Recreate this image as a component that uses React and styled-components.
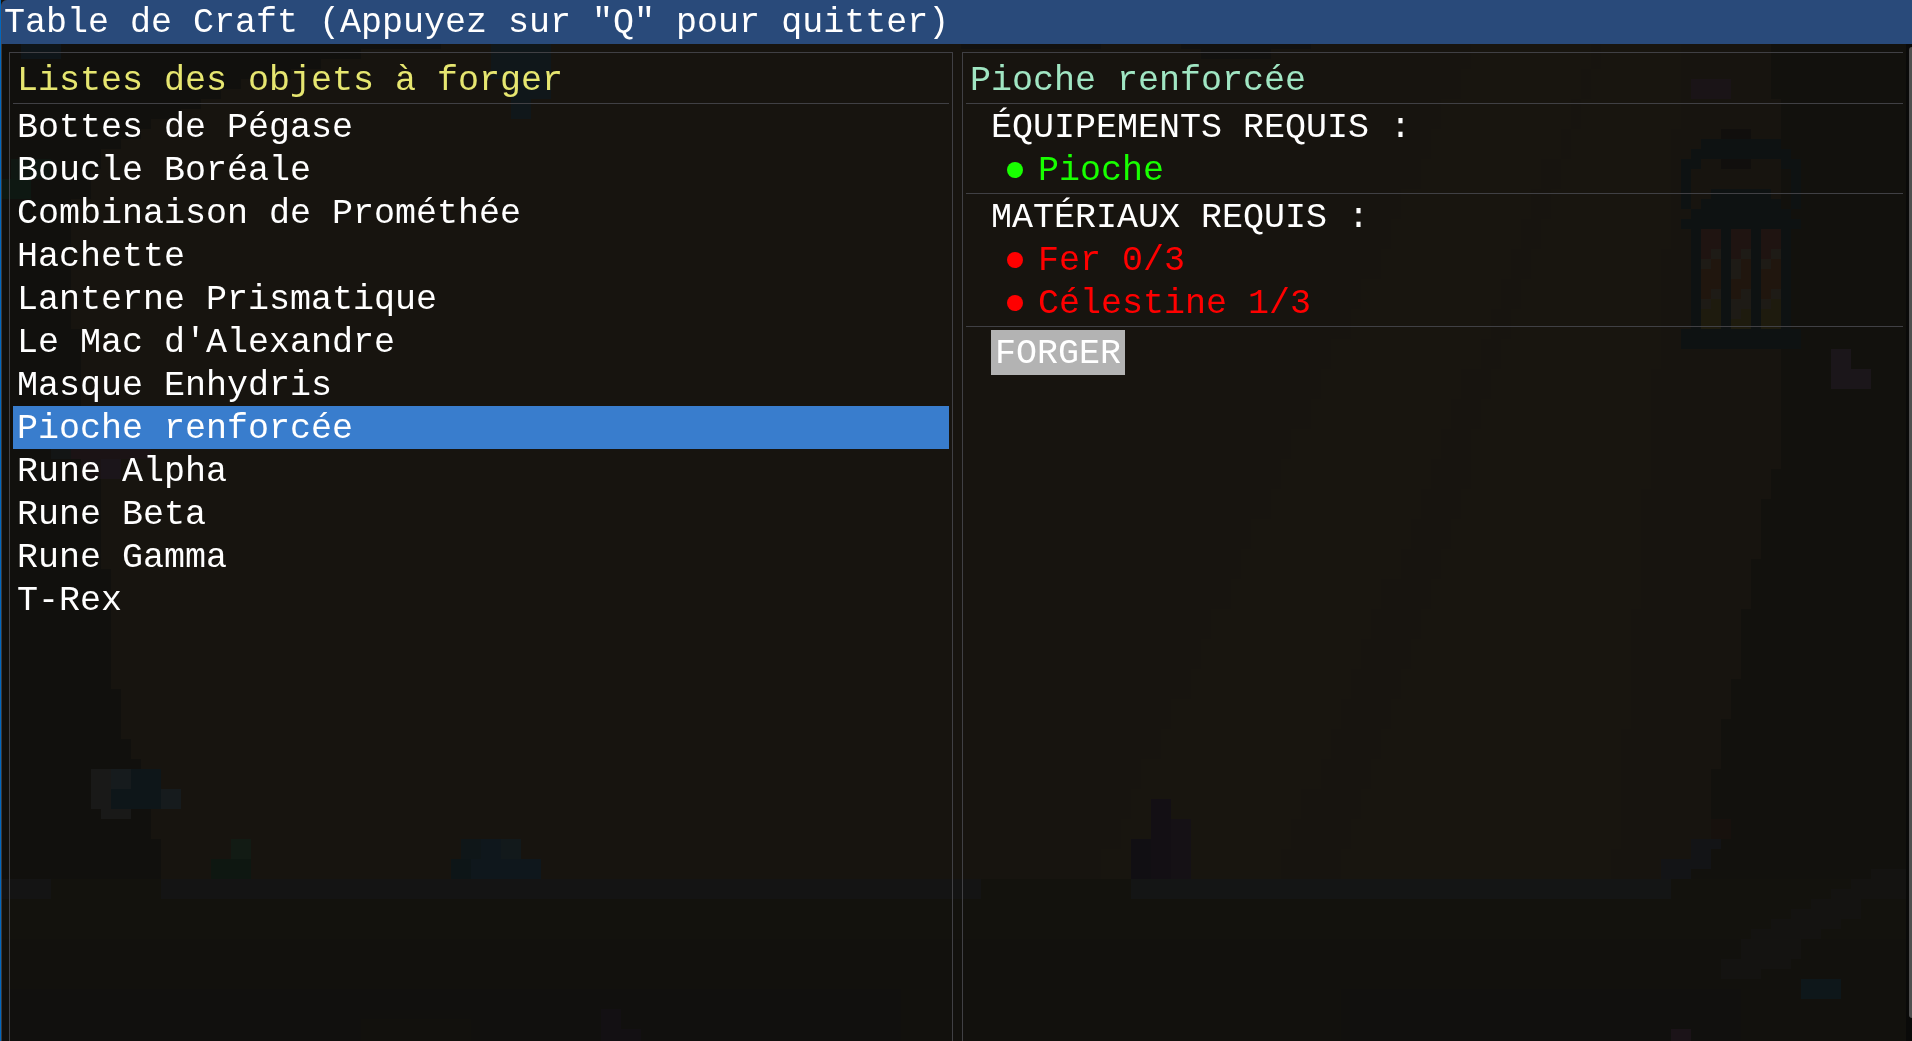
import React, { useState } from "react";
import styled, { createGlobalStyle } from "styled-components";

const GlobalStyle = createGlobalStyle`
  * { box-sizing: border-box; }
  body { margin: 0; background: #100f0d; }
  ul { list-style: none; margin: 0; padding: 0; }
  h1, h2, h3 { margin: 0; font: inherit; }
  button { font: inherit; color: inherit; border: 0; cursor: pointer; }
`;

const line = "#404044";

const Backdrop = styled.svg`
  position: fixed;
  inset: 0;
  width: 100%;
  height: 100%;
  z-index: -1;
`;

const Window = styled.main`
  min-height: 100vh;
  display: flex;
  flex-direction: column;
  border-left: 1px solid #0067c0;
  color: #ffffff;
  font-family: "Liberation Mono", "DejaVu Sans Mono", monospace;
  font-size: 35px;
  line-height: 39px;
`;

const TitleBar = styled.h1`
  height: 44px;
  padding: 4px 2px 0;
  background: #294a7a;
  border-left: 1px solid #3f4a63;
  border-top-left-radius: 6px;
  white-space: nowrap;
`;

const Body = styled.div`
  flex: 1;
  display: flex;
  border-left: 1px solid #3a3a3d;
`;

const Columns = styled.div`
  flex: 1;
  display: grid;
  grid-template-columns: 1fr 1fr;
  gap: 9px;
  padding: 8px 0 0 7px;
`;

const Panel = styled.section`
  min-width: 0;
  padding: 0 3px;
  border: solid ${line};
  border-width: ${(p) => (p.$open ? "1px 0 0 1px" : "1px 1px 0 1px")};
  margin-right: ${(p) => (p.$open ? "3px" : "0")};
  padding-right: ${(p) => (p.$open ? "0" : "3px")};
`;

const PanelTitle = styled.h2`
  padding: 9px 4px 2px;
  border-bottom: 1px solid ${line};
  color: ${(p) => p.$color};
`;

const ItemList = styled.ul`
  padding-top: 1px;
`;

const ItemButton = styled.button`
  display: block;
  width: 100%;
  padding: 4px 4px 0;
  text-align: left;
  background: ${(p) => (p.$selected ? "#397dcd" : "transparent")};
`;

const Requirements = styled.div`
  padding: 1px 0 2px 25px;
  border-bottom: 1px solid ${line};
`;

const RequirementTitle = styled.h3`
  padding-top: 4px;
`;

const Requirement = styled.li`
  display: flex;
  align-items: center;
  gap: 15px;
  padding: 4px 0 0 16px;
  color: ${(p) => (p.$met ? "#18ff00" : "#ff0000")};

  &::before {
    content: "";
    width: 16px;
    height: 16px;
    margin-bottom: 4px;
    border-radius: 50%;
    background: currentColor;
  }
`;

const ForgeButton = styled.button`
  display: block;
  margin: 3px 0 0 25px;
  padding: 5px 4px 1px;
  background: #b3b3b3;
`;

const ScrollTrack = styled.div`
  width: 6px;
  padding: 3px 0 23px 3px;
  background: #0a0a09;
  display: flex;
`;

const ScrollThumb = styled.div`
  flex: 1;
  background: #4f4f4f;
  border-radius: 3px 0 0 3px;
`;

/* Cave scenery on a 10px tile grid: x, y, width, height, fill */
const tiles = [
  [2, 3, 4, 2, "#0f161a"],
  [49, 3, 6, 4, "#10171a"], [51, 7, 4, 2, "#10171a"], [51, 9, 2, 2, "#10171a"],
  [1, 15, 4, 2, "#0f1712"], [0, 17, 3, 2, "#0e1812"],
  [7, 43, 8, 2, "#1b1315"], [5, 43, 2, 2, "#131515"], [8, 45, 2, 2, "#1a1315"], [10, 45, 2, 2, "#1b151a"],
  [9, 76, 2, 4, "#191918"], [11, 76, 2, 2, "#161b1d"], [13, 76, 3, 4, "#0e1619"],
  [11, 78, 2, 2, "#0e1619"], [16, 78, 2, 2, "#161b1d"], [10, 80, 3, 1, "#191918"],
  [23, 83, 2, 2, "#121b14"], [21, 85, 4, 2, "#0e1711"],
  [46, 83, 2, 2, "#0f1618"], [48, 83, 2, 2, "#0f171c"], [50, 83, 2, 2, "#12191b"],
  [45, 85, 2, 2, "#0d1517"], [47, 85, 7, 2, "#0f171c"],
  [0, 87, 5, 2, "#141414"], [16, 87, 82, 2, "#141414"], [113, 87, 54, 2, "#141515"],
  [166, 85, 3, 2, "#131416"], [169, 83, 3, 1, "#131416"], [169, 84, 2, 2, "#131416"],
  [171, 81, 2, 2, "#17110d"],
  [113, 83, 2, 4, "#110f13"], [115, 79, 2, 8, "#130f14"], [117, 81, 2, 6, "#151115"],
  [180, 97, 4, 2, "#0e171a"], [167, 102, 2, 2, "#1b1318"],
  [60, 100, 2, 4, "#131013"], [62, 102, 2, 2, "#131013"],
  [169, 7, 4, 2, "#1a1417"],
  [183, 34, 2, 4, "#1b161a"], [185, 36, 2, 2, "#1b161a"],
  [96, 3, 14, 1, "#12110f"], [118, 3, 13, 1, "#12110f"], [120, 4, 7, 1, "#12110f"],
];

const frame = "#0e1212";
const lantern = [
  [172, 12, 3, 1, "#110f0d"], [172, 15, 3, 1, "#110f0d"],
  [170, 13, 8, 2, frame], [169, 14, 1, 2, frame], [178, 14, 1, 2, frame],
  [168, 15, 1, 5, frame], [179, 15, 1, 5, frame],
  [171, 18, 6, 1, frame], [170, 19, 8, 1, frame], [169, 20, 10, 1, frame],
  [168, 21, 12, 1, frame], [169, 22, 10, 10, frame], [168, 32, 12, 2, frame],
  ...[170, 173, 176].flatMap((x) => [
    [x, 22, 2, 3, "#1f1411"],
    [x, 25, 2, 4, "#20160e"],
    [x, 29, 2, 3, "#1e1b0e"],
    [x + 1, 24, 1, 1, "#1e1b16"],
    [x, 25, 1, x === 173 ? 2 : 1, "#1e1b16"],
    [x + 1, 28, 1, x === 173 ? 2 : 1, "#1e1b16"],
    [x, 29, 1, x === 173 ? 2 : 1, "#1e1b16"],
  ]),
];

/* Stepped edges of the cave walls: [x, y at which that x ends] */
const leftWall = [
  [44, 4], [36, 5], [32, 6], [29, 7], [24, 8], [22, 9], [20, 10], [18, 11], [15, 12], [14, 13],
  [12, 14], [10, 16], [9, 19], [7, 32], [8, 42], [10, 56], [11, 68], [12, 73], [13, 75],
  [14, 78], [15, 83], [16, 87],
];
const rightWall = [
  [177, 9], [178, 46], [177, 49], [176, 55], [175, 60], [174, 67], [173, 71], [172, 76],
  [171, 83], [169, 85], [167, 87],
];

const wallPath = (steps, side) =>
  `M${side} 3` + steps.map(([x, y]) => `H${x}V${y}`).join("") + `H${side}Z`;

const beam = (topLeft, topRight, bottomLeft, bottomRight) => {
  let d = "";
  for (let y = 3; y < 87; y += 3) {
    const t = (y - 3) / 84;
    const a = Math.round(topLeft + (bottomLeft - topLeft) * t);
    const b = Math.round(topRight + (bottomRight - topRight) * t);
    d += `M${a} ${y}H${b}V${y + 3}H${a}Z`;
  }
  return d;
};

function Scenery() {
  return (
    <Backdrop viewBox="0 0 1912 1041" preserveAspectRatio="xMidYMid slice" shapeRendering="crispEdges" aria-hidden="true">
      <rect width="1912" height="1041" fill="#17140f" />
      <g transform="translate(1 9) scale(10)">
        <path d={beam(147, 159, 109, 127)} fill="#18150f" />
        <path d={beam(160, 168, 133, 161)} fill="#18150f" />
        <path d={wallPath(leftWall, -1)} fill="#11100d" />
        <path d={wallPath(rightWall, 192)} fill="#12110d" />
        <rect x="-1" y="87" width="193" height="18" fill="#13120d" />
        <rect x="-1" y="93" width="193" height="12" fill="#12110d" />
        <path d="M-1 98H36V104H-1ZM36 98H90V104H47V101H36ZM134 98H174V104H134Z" fill="#11100e" />
        <path
          d="M172 95H174V93H175V92H177V91H179V90H181V89H183V88H185V87H187V86H191V89H186V91H184V92H182V93H180V95H179V96H176V97H172Z"
          fill="#141311"
        />
        {[...tiles, ...lantern].map(([x, y, w, h, fill], i) => (
          <rect key={i} x={x} y={y} width={w} height={h} fill={fill} />
        ))}
      </g>
    </Backdrop>
  );
}

const items = [
  "Bottes de Pégase",
  "Boucle Boréale",
  "Combinaison de Prométhée",
  "Hachette",
  "Lanterne Prismatique",
  "Le Mac d'Alexandre",
  "Masque Enhydris",
  "Pioche renforcée",
  "Rune Alpha",
  "Rune Beta",
  "Rune Gamma",
  "T-Rex",
];

export default function App() {
  const [selected, setSelected] = useState("Pioche renforcée");

  return (
    <>
      <GlobalStyle />
      <Scenery />
      <Window>
        <TitleBar>Table de Craft (Appuyez sur "Q" pour quitter)</TitleBar>
        <Body>
          <Columns>
            <Panel>
              <PanelTitle $color="#e6e670">Listes des objets à forger</PanelTitle>
              <ItemList>
                {items.map((name) => (
                  <li key={name}>
                    <ItemButton
                      type="button"
                      $selected={name === selected}
                      aria-pressed={name === selected}
                      onClick={() => setSelected(name)}
                    >
                      {name}
                    </ItemButton>
                  </li>
                ))}
              </ItemList>
            </Panel>
            <Panel $open>
              <PanelTitle $color="#a0e6c3">{selected}</PanelTitle>
              <Requirements>
                <RequirementTitle>ÉQUIPEMENTS REQUIS :</RequirementTitle>
                <ul>
                  <Requirement $met>Pioche</Requirement>
                </ul>
              </Requirements>
              <Requirements>
                <RequirementTitle>MATÉRIAUX REQUIS :</RequirementTitle>
                <ul>
                  <Requirement>Fer 0/3</Requirement>
                  <Requirement>Célestine 1/3</Requirement>
                </ul>
              </Requirements>
              <ForgeButton type="button">FORGER</ForgeButton>
            </Panel>
          </Columns>
          <ScrollTrack>
            <ScrollThumb />
          </ScrollTrack>
        </Body>
      </Window>
    </>
  );
}
